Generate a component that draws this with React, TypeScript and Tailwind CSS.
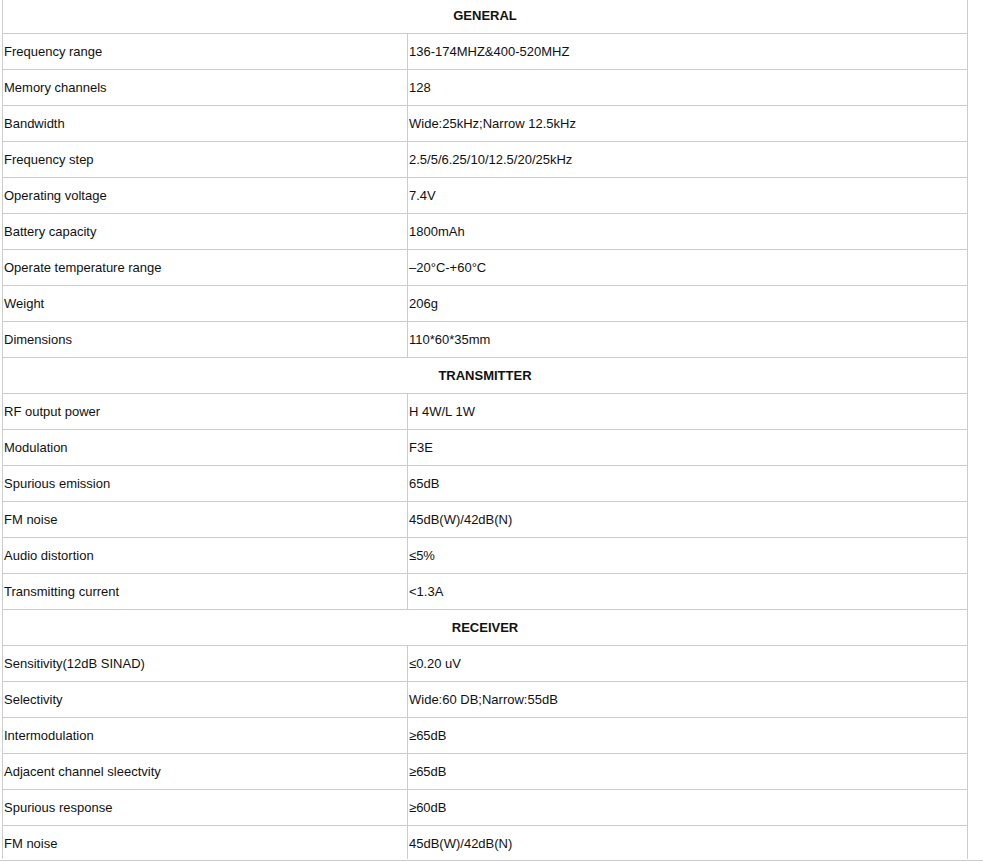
const sections: { title: string; rows: [string, string][] }[] = [
  {
    title: 'GENERAL',
    rows: [
      ['Frequency range', '136-174MHZ&400-520MHZ'],
      ['Memory channels', '128'],
      ['Bandwidth', 'Wide:25kHz;Narrow 12.5kHz'],
      ['Frequency step', '2.5/5/6.25/10/12.5/20/25kHz'],
      ['Operating voltage', '7.4V'],
      ['Battery capacity', '1800mAh'],
      ['Operate temperature range', '\u201320\u00b0C-+60\u00b0C'],
      ['Weight', '206g'],
      ['Dimensions', '110*60*35mm'],
    ],
  },
  {
    title: 'TRANSMITTER',
    rows: [
      ['RF output power', 'H 4W/L 1W'],
      ['Modulation', 'F3E'],
      ['Spurious emission', '65dB'],
      ['FM noise', '45dB(W)/42dB(N)'],
      ['Audio distortion', '\u22645%'],
      ['Transmitting current', '<1.3A'],
    ],
  },
  {
    title: 'RECEIVER',
    rows: [
      ['Sensitivity(12dB SINAD)', '\u22640.20 uV'],
      ['Selectivity', 'Wide:60 DB;Narrow:55dB'],
      ['Intermodulation', '\u226565dB'],
      ['Adjacent channel sleectvity', '\u226565dB'],
      ['Spurious response', '\u226560dB'],
      ['FM noise', '45dB(W)/42dB(N)'],
    ],
  },
];

export default function App() {
  return (
    <div
      className="h-[861px] w-[983px] bg-white border-b border-[#cccccc] text-[13px] text-[#111]"
      style={{ fontFamily: '"Liberation Sans", Arial, sans-serif' }}
    >
      <div className="h-[859px] overflow-hidden">
        {/* Spec table */}
        <div className="-mt-[3px] ml-[2px] w-[966px] border-l border-r border-[#cccccc]">
          {sections.map((section) => (
            <div key={section.title}>
              <div className="flex h-[36px] items-center justify-center border-t border-[#cccccc] font-bold">
                {section.title}
              </div>
              {section.rows.map(([label, value], i) => (
                <div key={i} className="flex h-[36px] border-t border-[#cccccc]">
                  <div className="flex w-[404px] items-center pl-px">{label}</div>
                  <div className="flex flex-1 items-center border-l border-[#cccccc] pl-px">{value}</div>
                </div>
              ))}
            </div>
          ))}
        </div>
      </div>
    </div>
  );
}
